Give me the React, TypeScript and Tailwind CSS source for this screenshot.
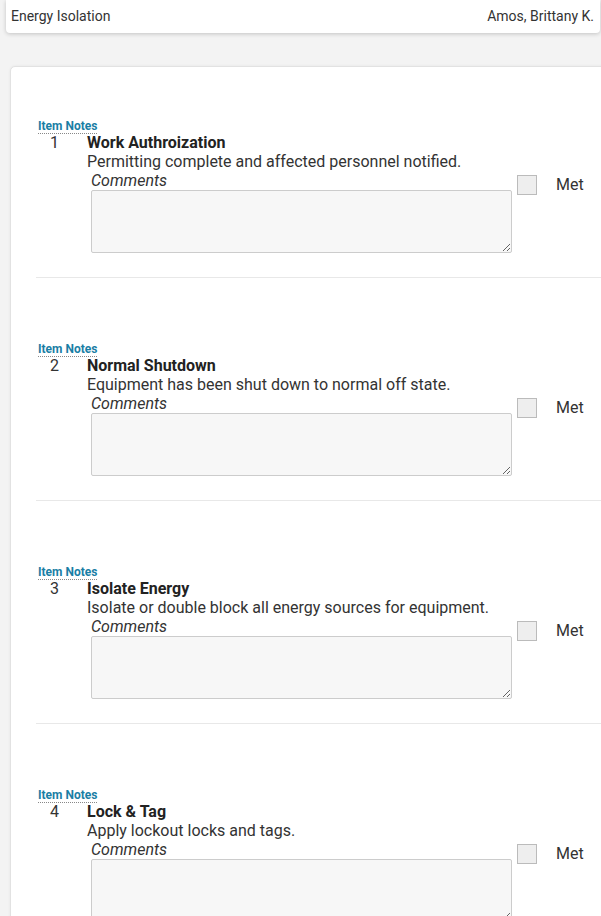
const ITEMS = [
  { n: 1, title: 'Work Authroization', desc: 'Permitting complete and affected personnel notified.' },
  { n: 2, title: 'Normal Shutdown', desc: 'Equipment has been shut down to normal off state.' },
  { n: 3, title: 'Isolate Energy', desc: 'Isolate or double block all energy sources for equipment.' },
  { n: 4, title: 'Lock & Tag', desc: 'Apply lockout locks and tags.' },
]

export default function App() {
  return (
    <div className="min-h-[916px] bg-[#f3f3f3] font-['Roboto',sans-serif] text-[#333] overflow-hidden">
      {/* header bar */}
      <div className="ml-[6px] mr-[1px] h-[33px] flex items-center justify-between pl-[5px] pr-[6px] bg-white rounded-b-[4px] shadow-[0_1px_4px_rgba(0,0,0,0.2)] text-[14px]">
        <span>Energy Isolation</span>
        <span>Amos, Brittany K.</span>
      </div>

      {/* checklist card */}
      <div className="mt-[33px] ml-[10px] -mr-[10px] bg-white rounded-[5px] border border-[#e2e2e2] shadow-[0_0_3px_rgba(0,0,0,0.06)] pl-[25px] pt-[53px] flex flex-col gap-[65px]">
        {ITEMS.map((item) => (
          <div key={item.n} className="border-b border-[#e8e8e8] pb-[24px]">
            <div className="pl-[2px] h-[14px] flex items-start">
              <span className="text-[12px] leading-[13px] font-bold text-[#1a7ea5] border-b border-dotted border-[#888]">
                Item Notes
              </span>
            </div>
            <div className="flex">
              <div className="w-[51px] pl-[14px] text-[16px] leading-[18px]">{item.n}</div>
              <div className="flex-1">
                <p className="text-[16px] leading-[18px] font-bold text-[#222]">{item.title}</p>
                <p className="text-[16px] leading-[20px]">{item.desc}</p>
                <div className="flex">
                  <div className="pl-[4px]">
                    <p className="text-[16px] leading-[18px] italic">Comments</p>
                    <textarea className="block w-[421px] h-[63px] bg-[#f7f7f7] border border-[#ccc] rounded-[2px]" />
                  </div>
                  <div className="flex items-center pt-[3px] h-fit">
                    <span className="ml-[5px] w-[20px] h-[20px] bg-[#eee] border border-[#bbb]" />
                    <span className="ml-[19px] text-[16px] leading-[18px]">Met</span>
                  </div>
                </div>
              </div>
            </div>
          </div>
        ))}
      </div>
    </div>
  )
}
